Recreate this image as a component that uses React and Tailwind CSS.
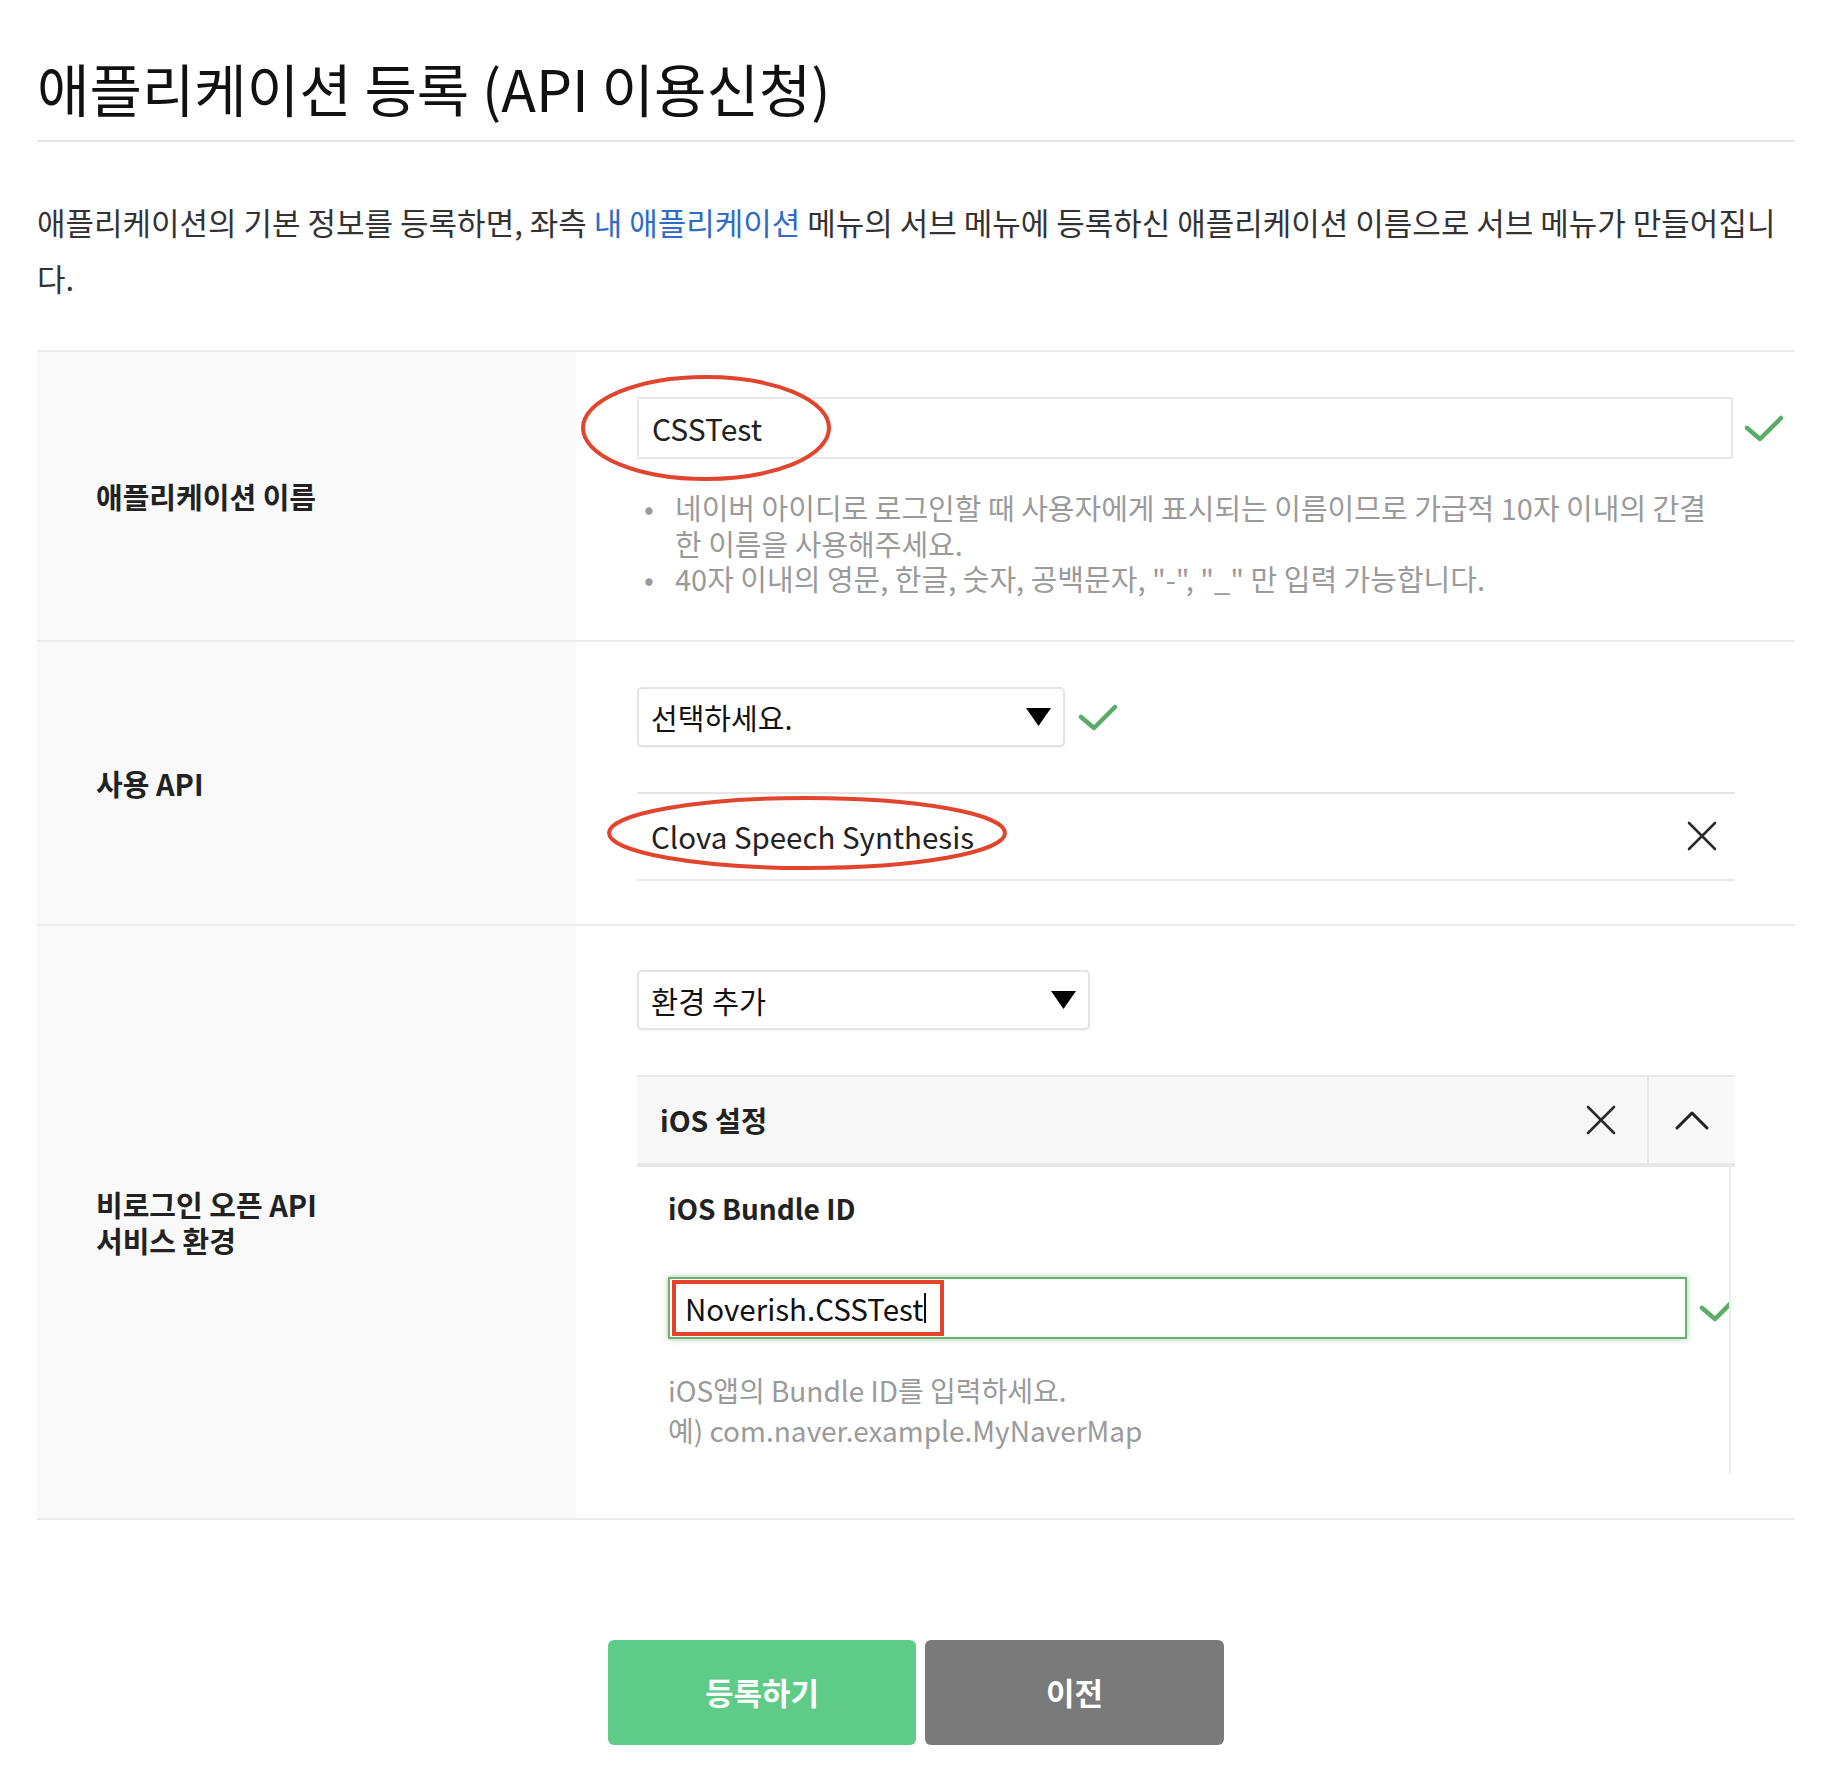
import React from 'react'

const FONT = "font-['Noto_Sans_CJK_KR','Noto_Sans',sans-serif]"

function Check({ className = '' }) {
  return (
    <svg className={className} width="40" height="28" viewBox="0 0 40 28" fill="none">
      <path d="M3 14 L16 25 L37 4" stroke="#5aac67" strokeWidth="4.5" strokeLinecap="round" strokeLinejoin="round" />
    </svg>
  )
}

function Cross({ size = 30 }) {
  return (
    <svg width={size} height={size} viewBox="0 0 30 30" fill="none">
      <path d="M2 2 L28 28 M28 2 L2 28" stroke="#2b2b2b" strokeWidth="2.6" strokeLinecap="round" />
    </svg>
  )
}

function Caret() {
  return (
    <svg width="36" height="22" viewBox="0 0 36 22" fill="none">
      <path d="M3 19 L18 4 L33 19" stroke="#222" strokeWidth="3" strokeLinecap="round" strokeLinejoin="round" />
    </svg>
  )
}

function Triangle() {
  return (
    <svg width="25" height="18" viewBox="0 0 25 18">
      <polygon points="0,0 25,0 12.5,18" fill="#000" />
    </svg>
  )
}

// red hand-drawn style annotation
function RedEllipse({ w, h, className }) {
  return (
    <svg className={`absolute pointer-events-none ${className}`} width={w} height={h} viewBox={`0 0 ${w} ${h}`} fill="none">
      <ellipse cx={w / 2} cy={h / 2} rx={w / 2 - 3} ry={h / 2 - 3} stroke="#e2452d" strokeWidth="4" />
    </svg>
  )
}

function Select({ text, width, textSize }) {
  return (
    <div className={`${width} h-[60px] border-2 border-[#e3e3e3] rounded-[5px] shadow-[0_1px_2px_rgba(0,0,0,0.05)] bg-white flex items-center justify-between pl-[12px] pr-[12px]`}>
      <span className={`${textSize} leading-[36px] text-[#111]`}>{text}</span>
      <Triangle />
    </div>
  )
}

function Row({ label, children }) {
  return (
    <div className="flex border-b-2 border-[#ebebeb]">
      <div className="w-[539px] shrink-0 bg-[#f9f9f9] pl-[59px] flex items-center">
        <div className="text-[29px] leading-[36px] font-bold text-[#222]">{label}</div>
      </div>
      <div className="flex-1 min-w-0 pl-[61px] pr-[11px]">{children}</div>
    </div>
  )
}

export default function App() {
  return (
    <div className={`${FONT} bg-white min-h-[1786px] px-[37px] pt-[56px] pb-[41px] text-[#333]`}>
      {/* Title */}
      <h1 className="text-[57px] leading-[62px] font-normal text-[#111]">애플리케이션 등록 (API 이용신청)</h1>
      <div className="mt-[22px] h-[2px] bg-[#e6e6e6]" />

      <p className="mt-[52px] text-[31px] leading-[56px] text-[#333]">
        애플리케이션의 기본 정보를 등록하면, 좌측 <span className="text-[#2f6bc7]">내 애플리케이션</span> 메뉴의 서브 메뉴에 등록하신 애플리케이션 이름으로 서브 메뉴가 만들어집니<br />다.
      </p>

      {/* Form table */}
      <div className="mt-[44px] border-t-2 border-[#ebebeb]">
        <Row label="애플리케이션 이름">
          <div className="pt-[45px] pb-[43px]">
            <div className="flex items-center gap-[11px]">
              <div className="relative flex-1 h-[62px] border-2 border-[#e8e8e8] bg-white flex items-center pl-[13px]">
                <span className="text-[30px] leading-[36px] text-[#222]">CSSTest</span>
                <RedEllipse w={252} h={108} className="left-[-59px] top-[-25px]" />
              </div>
              <Check />
            </div>
            <ul className="mt-[31px] mr-[49px] text-[29px] leading-[35.5px] text-[#9a9a9a]">
              <li className="flex">
                <span className="w-[38px] shrink-0 pl-[7px]">•</span>
                <span>네이버 아이디로 로그인할 때 사용자에게 표시되는 이름이므로 가급적 10자 이내의 간결<br />한 이름을 사용해주세요.</span>
              </li>
              <li className="flex">
                <span className="w-[38px] shrink-0 pl-[7px]">•</span>
                <span>40자 이내의 영문, 한글, 숫자, 공백문자, "-", "_" 만 입력 가능합니다.</span>
              </li>
            </ul>
          </div>
        </Row>

        <Row label="사용 API">
          <div className="pt-[45px] pb-[43px]">
            <div className="flex items-center gap-[13px]">
              <Select text="선택하세요." width="w-[428px]" textSize="text-[29px]" />
              <Check />
            </div>
            <div className="relative mt-[45px] mr-[49px] h-[89px] border-y-2 border-[#e6e6e6] flex items-center justify-between pl-[14px] pr-[18px]">
              <span className="text-[29.5px] leading-[36px] text-[#222]">Clova Speech Synthesis</span>
              <Cross />
              <RedEllipse w={402} h={76} className="left-[-31px] top-[1px]" />
            </div>
          </div>
        </Row>

        <Row label={<>비로그인 오픈 API<br />서비스 환경</>}>
          <div className="pt-[44px] pb-[44px]">
            <Select text="환경 추가" width="w-[453px]" textSize="text-[29.5px]" />
            <div className="mt-[45px] mr-[49px]">
              <div className="h-[92px] border-t-2 border-b-4 border-[#e8e8e8] bg-[#f8f8f8] flex">
                <div className="flex-1 pl-[23px] flex items-center text-[28.5px] leading-[36px] font-bold text-[#222]">iOS 설정</div>
                <div className="w-[92px] flex items-center justify-center"><Cross /></div>
                <div className="w-[88px] border-l-2 border-[#e8e8e8] flex items-center justify-center"><Caret /></div>
              </div>
              <div className="mr-[4px] border-r-2 border-[#ececec] overflow-hidden pl-[31px] pt-[23px] pb-[24px]">
                <div className="text-[28px] leading-[36px] font-bold text-[#222]">iOS Bundle ID</div>
                <div className="mt-[51px] flex items-center">
                  <div className="relative w-[1019px] shrink-0 h-[62px] border-2 border-[#6cb070] shadow-[0_0_6px_rgba(92,172,100,0.6)] bg-white flex items-center pl-[15px]">
                    <span className="text-[29.5px] leading-[36px] text-[#111]">Noverish.CSSTest</span>
                    <span className="inline-block w-[2px] h-[30px] bg-[#111] ml-[1px]" />
                    <div className="absolute left-[2px] top-[1px] bottom-[1px] w-[272px] border-[4px] border-[#e6432b]" />
                  </div>
                  <Check className="ml-[12px] shrink-0" />
                </div>
                <div className="mt-[31px] text-[28px] leading-[40px] text-[#9a9a9a]">
                  <div>iOS앱의 Bundle ID를 입력하세요.</div>
                  <div>예) com.naver.example.MyNaverMap</div>
                </div>
              </div>
            </div>
          </div>
        </Row>
      </div>

      {/* Buttons */}
      <div className="mt-[120px] flex justify-center gap-[9px]">
        <button className="w-[308px] h-[105px] rounded-[6px] bg-[#5ecb88] text-white text-[31px] font-bold">등록하기</button>
        <button className="w-[299px] h-[105px] rounded-[6px] bg-[#7a7a7a] text-white text-[31px] font-bold">이전</button>
      </div>
    </div>
  )
}
